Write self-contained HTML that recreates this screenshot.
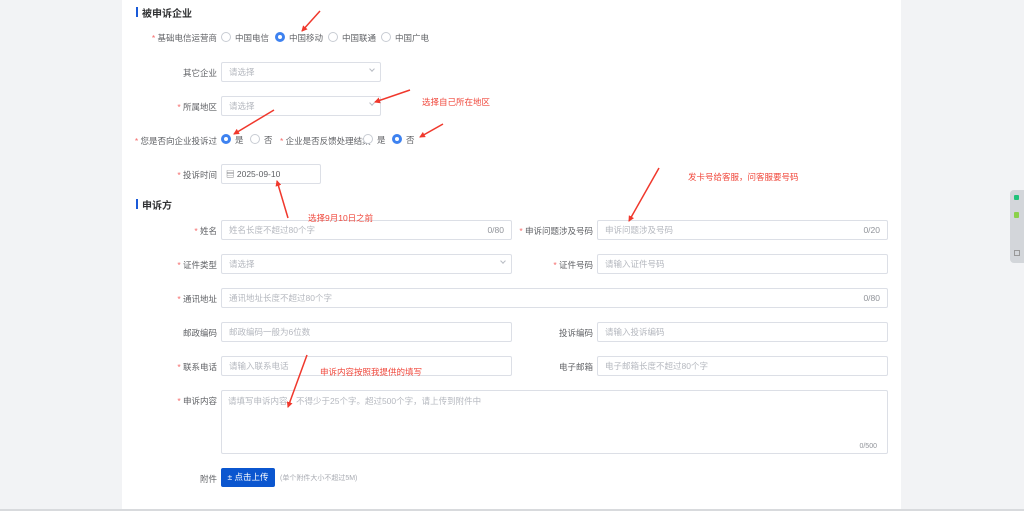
<!DOCTYPE html>
<html><head><meta charset="utf-8"><style>
*{margin:0;padding:0;box-sizing:border-box}
body{width:1024px;height:511px;background:#f2f3f5;position:relative;overflow:hidden;font-family:"Liberation Sans","Noto Sans CJK SC",sans-serif;font-size:8.5px;color:#606266}
.panel{position:absolute;left:122px;top:0;width:779px;height:511px;background:#fff}
.a{position:absolute;white-space:nowrap}
.t{font-size:10px;font-weight:bold;color:#303133}
.bar{position:absolute;width:2px;height:10px;background:#1a5ad8}
.lab{position:absolute;white-space:nowrap;text-align:right;color:#606266;width:120px}
.lab b{color:#f56c6c;font-weight:normal}
.in{position:absolute;border:1px solid #dcdfe6;border-radius:2px;background:#fff;color:#b5b8bf;padding-left:7px;line-height:18px}
.cnt{position:absolute;right:7px;top:0;color:#909399}
.rad{position:absolute;width:10px;height:10px;border:1px solid #c8ccd3;border-radius:50%;background:#fff}
.rad.on{border:3px solid #3e82f0}
.chev{position:absolute;right:6px;top:4px;width:4px;height:4px;border-right:1px solid #b8bcc4;border-bottom:1px solid #b8bcc4;transform:rotate(45deg)}
.red{color:#f0483c;position:absolute;white-space:nowrap}
</style></head><body>
<div class="panel"></div>
<div style="position:absolute;left:0;top:509px;width:1024px;height:2px;background:#d8dadd"></div>

<div class="bar" style="left:136px;top:7px"></div><div class="a t" style="left:142px;top:5px">被申诉企业</div>
<div class="lab" style="left:97px;top:32px"><b>*</b> 基础电信运营商</div>
<div class="rad" style="left:221px;top:32px"></div><div class="a" style="left:235px;top:32px">中国电信</div>
<div class="rad on" style="left:275px;top:32px"></div><div class="a" style="left:289px;top:32px">中国移动</div>
<div class="rad" style="left:328px;top:32px"></div><div class="a" style="left:342px;top:32px">中国联通</div>
<div class="rad" style="left:381px;top:32px"></div><div class="a" style="left:395px;top:32px">中国广电</div>

<div class="lab" style="left:97px;top:67px">其它企业</div>
<div class="in" style="left:221px;top:62px;width:160px;height:20px">请选择<i class="chev"></i></div>
<div class="lab" style="left:97px;top:101px"><b>*</b> 所属地区</div>
<div class="in" style="left:221px;top:96px;width:160px;height:20px">请选择<i class="chev"></i></div>

<div class="lab" style="left:97px;top:135px"><b>*</b> 您是否向企业投诉过</div>
<div class="rad on" style="left:221px;top:134px"></div><div class="a" style="left:235px;top:134px">是</div>
<div class="rad" style="left:250px;top:134px"></div><div class="a" style="left:264px;top:134px">否</div>
<div class="a" style="left:280px;top:135px"><span style="color:#f56c6c">*</span> 企业是否反馈处理结集</div>
<div class="rad" style="left:363px;top:134px"></div><div class="a" style="left:377px;top:134px">是</div>
<div class="rad on" style="left:392px;top:134px"></div><div class="a" style="left:406px;top:134px">否</div>

<div class="lab" style="left:97px;top:169px"><b>*</b> 投诉时间</div>
<div class="in" style="left:221px;top:164px;width:100px;height:20px;color:#606266;padding-left:4px">▤ 2025-09-10</div>

<div class="bar" style="left:136px;top:199px"></div><div class="a t" style="left:142px;top:197px">申诉方</div>

<div class="lab" style="left:97px;top:225px"><b>*</b> 姓名</div>
<div class="in" style="left:221px;top:220px;width:291px;height:20px">姓名长度不超过80个字<span class="cnt">0/80</span></div>
<div class="lab" style="left:473px;top:225px"><b>*</b> 申诉问题涉及号码</div>
<div class="in" style="left:597px;top:220px;width:291px;height:20px">申诉问题涉及号码<span class="cnt">0/20</span></div>

<div class="lab" style="left:97px;top:259px"><b>*</b> 证件类型</div>
<div class="in" style="left:221px;top:254px;width:291px;height:20px">请选择<i class="chev"></i></div>
<div class="lab" style="left:473px;top:259px"><b>*</b> 证件号码</div>
<div class="in" style="left:597px;top:254px;width:291px;height:20px">请输入证件号码</div>

<div class="lab" style="left:97px;top:293px"><b>*</b> 通讯地址</div>
<div class="in" style="left:221px;top:288px;width:667px;height:20px">通讯地址长度不超过80个字<span class="cnt">0/80</span></div>

<div class="lab" style="left:97px;top:327px">邮政编码</div>
<div class="in" style="left:221px;top:322px;width:291px;height:20px">邮政编码一般为6位数</div>
<div class="lab" style="left:473px;top:327px">投诉编码</div>
<div class="in" style="left:597px;top:322px;width:291px;height:20px">请输入投诉编码</div>

<div class="lab" style="left:97px;top:361px"><b>*</b> 联系电话</div>
<div class="in" style="left:221px;top:356px;width:291px;height:20px">请输入联系电话</div>
<div class="lab" style="left:473px;top:361px">电子邮箱</div>
<div class="in" style="left:597px;top:356px;width:291px;height:20px">电子邮箱长度不超过80个字</div>

<div class="lab" style="left:97px;top:395px"><b>*</b> 申诉内容</div>
<div class="in" style="left:221px;top:390px;width:667px;height:64px;line-height:20px;padding-left:6px">请填写申诉内容，不得少于25个字。超过500个字，请上传到附件中<span class="cnt" style="top:46px;right:10px;font-size:7px">0/500</span></div>

<div class="lab" style="left:97px;top:473px">附件</div>
<div class="a" style="left:221px;top:468px;width:54px;height:19px;background:#0b56cf;border-radius:2px;color:#fff;text-align:center;line-height:19px">± 点击上传</div>
<div class="a" style="left:280px;top:473px;color:#a8abb2;font-size:7px">(单个附件大小不超过5M)</div>

<div class="red" style="left:422px;top:96px">选择自己所在地区</div>
<div class="red" style="left:308px;top:212px">选择9月10日之前</div>
<div class="red" style="left:688px;top:171px">发卡号给客服，问客服要号码</div>
<div class="red" style="left:320px;top:366px">申诉内容按照我提供的填写</div>

<svg style="position:absolute;left:0;top:0" width="1024" height="511">
<defs><marker id="m" markerWidth="6" markerHeight="6" refX="5" refY="3" orient="auto" markerUnits="userSpaceOnUse"><path d="M0,0 L6,3 L0,6 Z" fill="#f0382c"/></marker></defs>
<g stroke="#f0382c" stroke-width="1.5" marker-end="url(#m)">
<line x1="320" y1="11" x2="302" y2="31"/>
<line x1="410" y1="90" x2="375" y2="102"/>
<line x1="274" y1="110" x2="234" y2="134"/>
<line x1="443" y1="124" x2="420" y2="137"/>
<line x1="288" y1="218" x2="277" y2="181"/>
<line x1="659" y1="168" x2="629" y2="221"/>
<line x1="307" y1="355" x2="288" y2="407"/>
</g>
</svg>

<div class="a" style="left:1010px;top:190px;width:14px;height:73px;background:#d3d6da;border-radius:4px 0 0 4px">
<div class="a" style="left:4px;top:5px;width:5px;height:5px;background:#21c27a;border-radius:1px"></div>
<div class="a" style="left:4px;top:22px;width:5px;height:6px;background:#8bd14a;border-radius:1px"></div>
<div class="a" style="left:4px;top:60px;width:6px;height:6px;border:1px solid #999"></div>
</div>
</body></html>
